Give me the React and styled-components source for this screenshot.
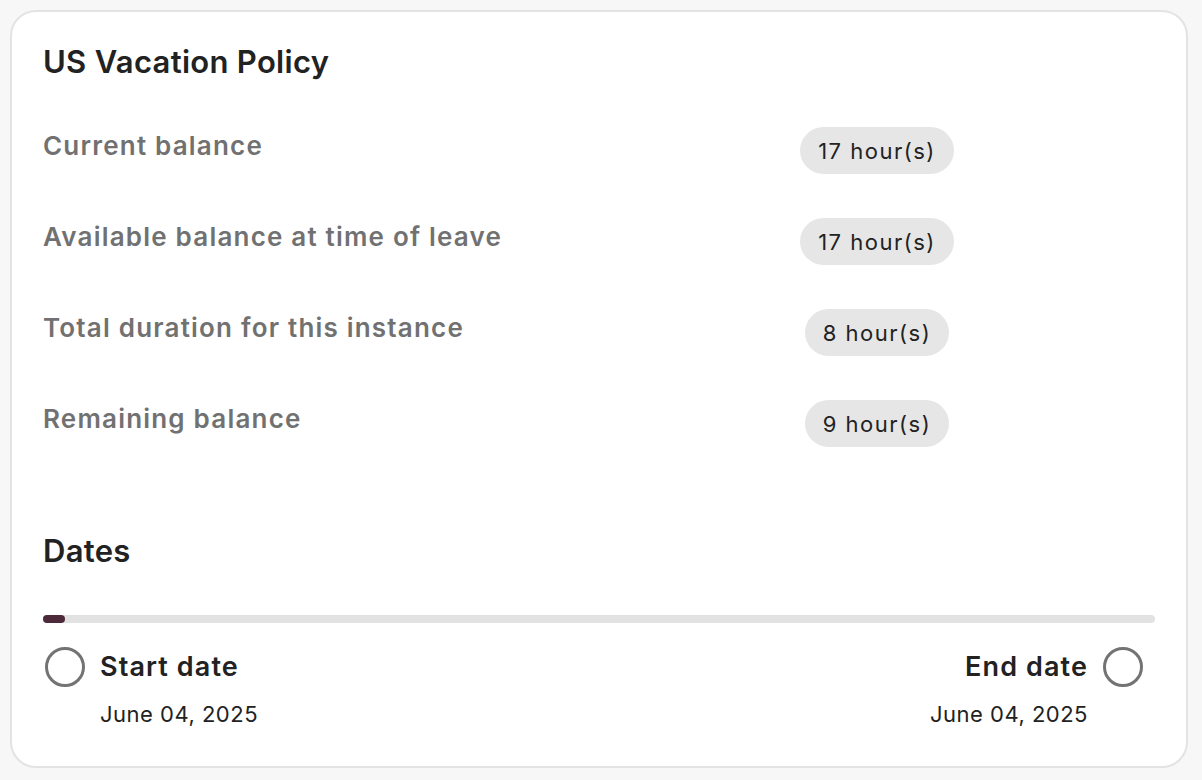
import React from "react";
import styled, { createGlobalStyle } from "styled-components";

const GlobalStyle = createGlobalStyle`
  html, body {
    margin: 0;
    background: #f7f7f7;
    font-family: Inter, "Noto Sans", "Liberation Sans", sans-serif;
    color: #222222;
  }
`;

const Page = styled.div`
  padding: 10px 14px 12px 10px;
`;

const Card = styled.section`
  background: #ffffff;
  border: 2px solid #e3e3e3;
  border-radius: 26px;
  padding: 30px 31px 34px 31px;
  height: 758px;
  box-sizing: border-box;
  display: flex;
  flex-direction: column;
`;

const Heading = styled.h2`
  margin: 0;
  font-size: 31px;
  line-height: 40px;
  font-weight: 600;
  color: #222222;
  letter-spacing: 0.3px;
`;

const Rows = styled.div`
  display: grid;
  grid-template-columns: 1fr 1fr;
  row-gap: 44px;
  margin-top: 45px;
  align-items: start;
`;

const Label = styled.div`
  font-size: 26px;
  line-height: 38px;
  font-weight: 600;
  letter-spacing: 1.2px;
  color: #717171;
`;

const Pill = styled.span`
  justify-self: center;
  display: inline-flex;
  align-items: center;
  height: 47px;
  padding: 0 18px;
  border-radius: 24px;
  background: #e6e6e6;
  font-size: 22px;
  font-weight: 400;
  letter-spacing: 1.5px;
  color: #222222;
`;

const DatesBlock = styled.div`
  margin-top: 84px;
`;

const Track = styled.div`
  height: 8px;
  margin-top: 44px;
  border-radius: 4px;
  background: #e2e2e2;
`;

const Fill = styled.div`
  height: 100%;
  border-radius: 4px;
  background: #4d2a39;
`;

const Ends = styled.div`
  display: flex;
  justify-content: space-between;
  margin-top: 24px;
  padding: 0 12px 0 2px;
`;

const End = styled.div`
  display: grid;
  grid-template-columns: ${(p) => (p.$right ? "auto 40px" : "40px auto")};
  column-gap: 15px;
  row-gap: 14px;
  align-items: center;
  text-align: ${(p) => (p.$right ? "right" : "left")};
`;

const Ring = styled.span`
  grid-column: ${(p) => (p.$right ? 2 : 1)};
  grid-row: 1;
  width: 40px;
  height: 40px;
  box-sizing: border-box;
  border: 3px solid #737373;
  border-radius: 50%;
`;

const EndTitle = styled.div`
  grid-column: ${(p) => (p.$right ? 1 : 2)};
  grid-row: 1;
  font-size: 27px;
  line-height: 36px;
  font-weight: 600;
  letter-spacing: 1.1px;
  color: #222222;
`;

const EndDate = styled.div`
  grid-column: ${(p) => (p.$right ? 1 : 2)};
  grid-row: 2;
  font-size: 22px;
  line-height: 26px;
  letter-spacing: 0.5px;
  color: #222222;
`;

const balances = [
  ["Current balance", "17 hour(s)"],
  ["Available balance at time of leave", "17 hour(s)"],
  ["Total duration for this instance", "8 hour(s)"],
  ["Remaining balance", "9 hour(s)"],
];

function DateEnd({ title, date, right }) {
  return (
    <End $right={right}>
      <Ring $right={right} />
      <EndTitle $right={right}>{title}</EndTitle>
      <EndDate $right={right}>{date}</EndDate>
    </End>
  );
}

export default function App() {
  const progress = 2;
  return (
    <Page>
      <GlobalStyle />
      <Card>
        <Heading>US Vacation Policy</Heading>
        <Rows>
          {balances.map(([label, value]) => (
            <React.Fragment key={label}>
              <Label>{label}</Label>
              <Pill>{value}</Pill>
            </React.Fragment>
          ))}
        </Rows>
        <DatesBlock>
          <Heading>Dates</Heading>
          <Track>
            <Fill style={{ width: `${progress}%` }} />
          </Track>
          <Ends>
            <DateEnd title="Start date" date="June 04, 2025" />
            <DateEnd title="End date" date="June 04, 2025" right />
          </Ends>
        </DatesBlock>
      </Card>
    </Page>
  );
}
